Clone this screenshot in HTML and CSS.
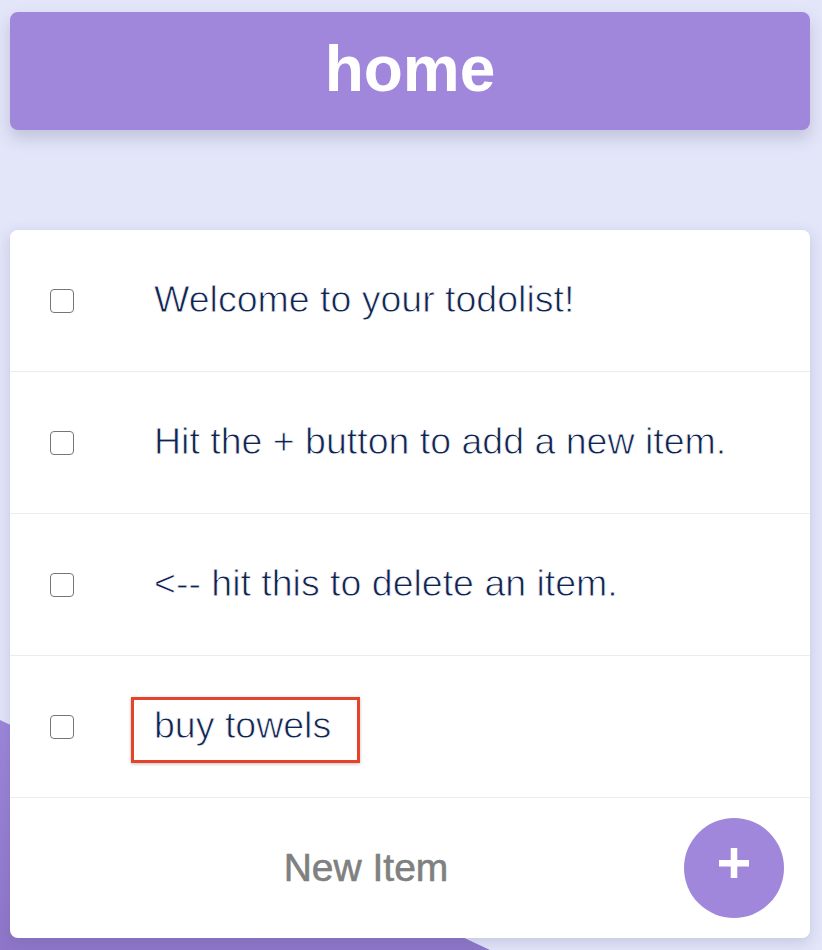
FILE: index.html
```html
<!DOCTYPE html>
<html>
<head>
<meta charset="utf-8">
<link rel="stylesheet" href="styles.css">
</head>
<body>
<div class="blob"></div>
<header class="title-bar"><h1>home</h1></header>
<main class="card">
  <ul class="list">
    <li class="item"><span class="box"></span><span class="label">Welcome to your todolist!</span></li>
    <li class="item"><span class="box"></span><span class="label">Hit the + button to add a new item.</span></li>
    <li class="item"><span class="box"></span><span class="label">&lt;-- hit this to delete an item.</span></li>
    <li class="item"><span class="box"></span><span class="label">buy towels</span><span class="highlight"></span></li>
  </ul>
  <div class="footer">
    <div class="new-item">New Item</div>
    <button class="add" aria-label="add">
      <svg width="30" height="30" viewBox="0 0 30 30"><rect x="0" y="12" width="30" height="6.5" fill="#fff"/><rect x="11.75" y="0" width="6.5" height="30" fill="#fff"/></svg>
    </button>
  </div>
</main>
</body>
</html>
```
FILE: styles.css
```css
html, body {
  margin: 0;
  height: 950px;
  overflow: hidden;
}
body {
  position: relative;
  background: #e3e6f9;
  padding: 12px 12px 0 10px;
  box-sizing: border-box;
  font-family: "Liberation Sans", Arial, sans-serif;
}
.blob {
  position: absolute;
  left: 0;
  top: 720px;
  width: 490px;
  height: 230px;
  clip-path: polygon(0 0, 100% 100%, 0 100%);
  background: linear-gradient(180deg, #9d86da 0%, #8f76c8 100%);
  z-index: 0;
}
.title-bar {
  position: relative;
  z-index: 1;
  height: 118px;
  background: #a087dc;
  border-radius: 8px;
  box-shadow: 0 8px 16px rgba(70, 70, 110, 0.22);
  display: flex;
  align-items: center;
  justify-content: center;
}
.title-bar h1 {
  margin: 0;
  color: #fff;
  font-size: 64px;
  font-weight: bold;
  line-height: 1;
  transform: translateY(-2px);
}
.card {
  position: relative;
  z-index: 1;
  margin-top: 100px;
  height: 708px;
  background: #fff;
  border-radius: 8px;
  box-shadow: 0 4px 14px rgba(80, 80, 140, 0.22);
  display: flex;
  flex-direction: column;
}
.list {
  list-style: none;
  margin: 0;
  padding: 0;
}
.item {
  position: relative;
  height: 141px;
  border-bottom: 1px solid #ededed;
  display: flex;
  align-items: center;
  padding-left: 40px;
}
.box {
  width: 22px;
  height: 22px;
  border: 1.5px solid #767676;
  border-radius: 4px;
  flex: none;
}
.label {
  margin-left: 80px;
  font-size: 37.5px;
  color: #102452;
  line-height: 1;
  transform: translateY(-1px);
  -webkit-text-stroke: 0.8px #fff;
}
.highlight {
  position: absolute;
  left: 121px;
  top: 41px;
  width: 223px;
  height: 60px;
  border: 3px solid #e5432a;
  box-shadow: 0 1px 3px rgba(0,0,0,0.25);
}
.footer {
  flex: 1;
  display: flex;
  align-items: center;
  padding: 0 26px 0 38px;
}
.new-item {
  flex: 1;
  text-align: center;
  font-size: 39px;
  color: #808080;
  -webkit-text-stroke: 0.6px #808080;
}
.add {
  width: 100px;
  height: 100px;
  border: none;
  border-radius: 50%;
  background: #a087dc;
  padding: 0;
  display: flex;
  align-items: center;
  justify-content: center;
}
.add svg {
  transform: translateY(-5px);
}
```
